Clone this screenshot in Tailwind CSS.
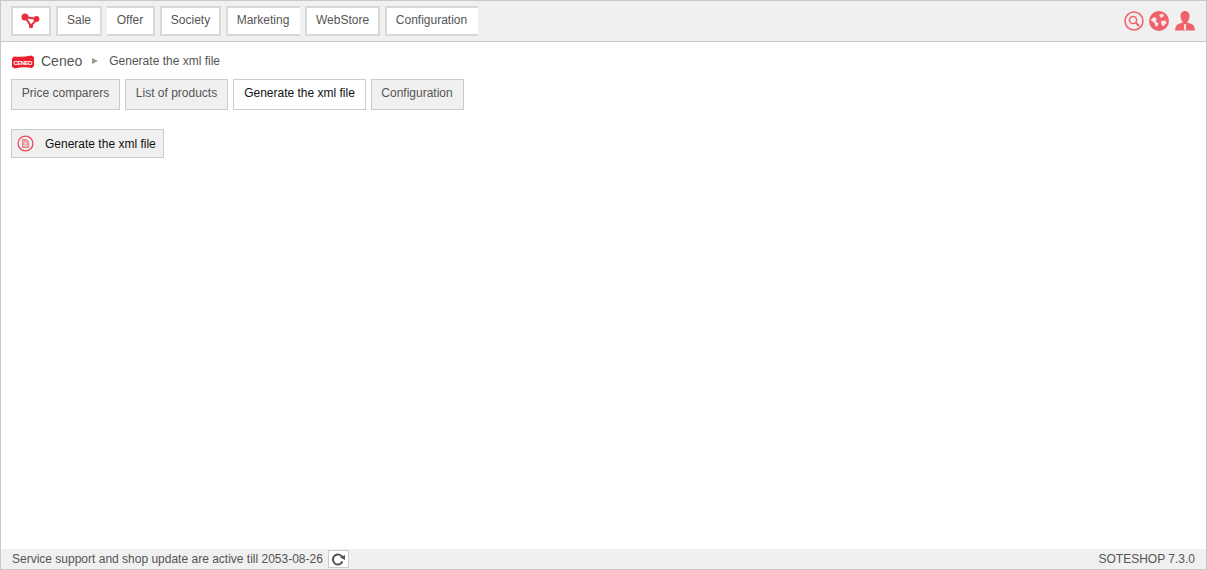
<!DOCTYPE html>
<html><head><meta charset="utf-8"><script src="https://cdn.jsdelivr.net/npm/@tailwindcss/browser@4"></script></head>
<body class="m-0 bg-white">
<div class="w-[1207px] h-[570px] border border-[#c8c8c8] flex flex-col overflow-hidden font-['Liberation_Sans',Arial,sans-serif] text-[12px] text-[#555]">
  <header class="h-[41px] shrink-0 bg-[#f0f0f0] border-b border-[#c8c8c8] flex items-start pt-[5px] pl-[10px] pr-[11px]">
    <nav class="flex gap-[5px] h-[30px]">
      <a class="w-[40px] bg-white border-2 border-[#d8d8d8] flex items-center justify-center">
        <svg width="20" height="16" viewBox="0 0 20 16"><path d="M4 4 L15.5 6 L10 13 Z" fill="none" stroke="#e8323c" stroke-width="2"/><circle cx="4" cy="4" r="3.5" fill="#e8323c"/><circle cx="15.5" cy="6" r="2.9" fill="#e8323c"/><circle cx="10" cy="13" r="2.2" fill="#e8323c"/></svg>
      </a>
      <a class="w-[46px] bg-white border-2 border-[#d8d8d8] flex items-center justify-center pb-[2px]">Sale</a>
      <a class="w-[48px] bg-white border-2 border-l-0 border-[#d8d8d8] flex items-center justify-center pb-[2px]">Offer</a>
      <a class="w-[61px] bg-white border-2 border-[#d8d8d8] flex items-center justify-center pb-[2px]">Society</a>
      <a class="w-[74px] bg-white border-2 border-r-0 border-[#d8d8d8] flex items-center justify-center pb-[2px] pr-[2px]">Marketing</a>
      <a class="w-[75px] bg-white border-2 border-[#d8d8d8] flex items-center justify-center pb-[2px]">WebStore</a>
      <a class="w-[93px] bg-white border-2 border-r-0 border-[#d8d8d8] flex items-center justify-center pb-[2px] pr-[2px]">Configuration</a>
    </nav>
    <div class="ml-auto flex items-center gap-[5px] h-[30px]">
      <svg width="20" height="20" viewBox="0 0 20 20"><circle cx="10" cy="10" r="9" fill="none" stroke="#f0616b" stroke-width="1.5"/><circle cx="9" cy="9" r="3.6" fill="none" stroke="#f0616b" stroke-width="1.5"/><path d="M11.6 11.6 L15 15" stroke="#f0616b" stroke-width="2"/></svg>
      <svg width="20" height="20" viewBox="0 0 20 20"><circle cx="10" cy="10" r="10" fill="#f0616b"/><path d="M1.5 9 L5 6 L8 8 L6.5 10.5 L9.5 12.5 L8 16 L6.5 15 L5.5 12 Z M12 10 L16.5 9.5 L17.5 12 L14 15.5 L12.5 13.5 Z M10 4 L13.5 2.5 L15 5 L12 7 Z" fill="#f8e8e8"/></svg>
      <svg class="ml-[1px]" width="20" height="20" viewBox="0 0 20 20"><path d="M10 0 C13 0 14.5 2.4 14.5 5 C14.5 8 13 10.5 12 11.5 L16 12.8 Q19.7 14 20 19.5 L0 19.5 Q.3 14 4 12.8 L8 11.5 C7 10.5 5.5 8 5.5 5 C5.5 2.4 7 0 10 0 Z" fill="#f0616b"/><path d="M9.2 13 L10.8 13 L11.2 18 L10 19.5 L8.8 18 Z" fill="#f8e8e8"/></svg>
    </div>
  </header>
  <main class="flex-1 pl-[10px]">
    <div class="h-[37px] flex items-center pt-[1px]">
      <svg width="24" height="14" viewBox="0 0 24 14" class="mr-[6px] mt-[1px]"><path d="M1 3.5 L3 1.5 Q12 2.5 20 .5 L23 2 L23 11 L21 13 Q12 11.5 4 13.5 L1 12 Z" fill="#e8202f"/><text x="12" y="9.7" text-anchor="middle" font-size="6" font-weight="700" fill="#fff" font-family="Liberation Sans" textLength="19">CENEO</text></svg>
      <span class="text-[14px]">Ceneo</span>
      <span class="ml-[10px] w-0 h-0 border-y-[3.5px] border-y-transparent border-l-[6px] border-l-[#999]"></span>
      <span class="ml-[11px]">Generate the xml file</span>
    </div>
    <div class="flex gap-[5px] h-[31px]">
      <a class="w-[109px] bg-[#f0f0f0] border border-[#ccc] flex items-center justify-center pb-[3px]">Price comparers</a>
      <a class="w-[103px] bg-[#f0f0f0] border border-[#ccc] flex items-center justify-center pb-[3px]">List of products</a>
      <a class="w-[133px] bg-white border border-[#ccc] flex items-center justify-center pb-[3px] text-[#111]">Generate the xml file</a>
      <a class="w-[93px] bg-[#f0f0f0] border border-[#ccc] flex items-center justify-center pb-[3px] pr-[1px]">Configuration</a>
    </div>
    <a class="mt-[19px] w-[153px] h-[29px] bg-[#f0f0f0] border border-[#ccc] flex items-center pl-[5px] text-[#111]">
      <svg width="17" height="17" viewBox="0 0 17 17"><circle cx="8.5" cy="8.5" r="7.4" fill="none" stroke="#ea4a55" stroke-width="1.3"/><path d="M5.5 4.5 H9.5 L11.5 6.5 V12.5 H5.5 Z" fill="#f3a5aa" stroke="#ea4a55" stroke-width=".6"/><path d="M7 8 H10 M7 10 H10" stroke="#fff" stroke-width=".7"/></svg>
      <span class="ml-[11px]">Generate the xml file</span>
    </a>
  </main>
  <footer class="h-[20px] shrink-0 bg-[#f0f0f0] flex items-center pl-[11px] pr-[11px]">
    <span>Service support and shop update are active till 2053-08-26</span>
    <span class="ml-[5px] w-[21px] h-[18px] bg-white border border-[#ccc] flex items-center justify-center">
      <svg width="14" height="13" viewBox="0 0 14 13"><path d="M11.5 4.5 A5 5 0 1 0 11.5 8.5" fill="none" stroke="#555" stroke-width="2"/><path d="M9 4.5 L14 2 L14 7 Z" fill="#555"/></svg>
    </span>
    <span class="ml-auto">SOTESHOP 7.3.0</span>
  </footer>
</div>
</body></html>
